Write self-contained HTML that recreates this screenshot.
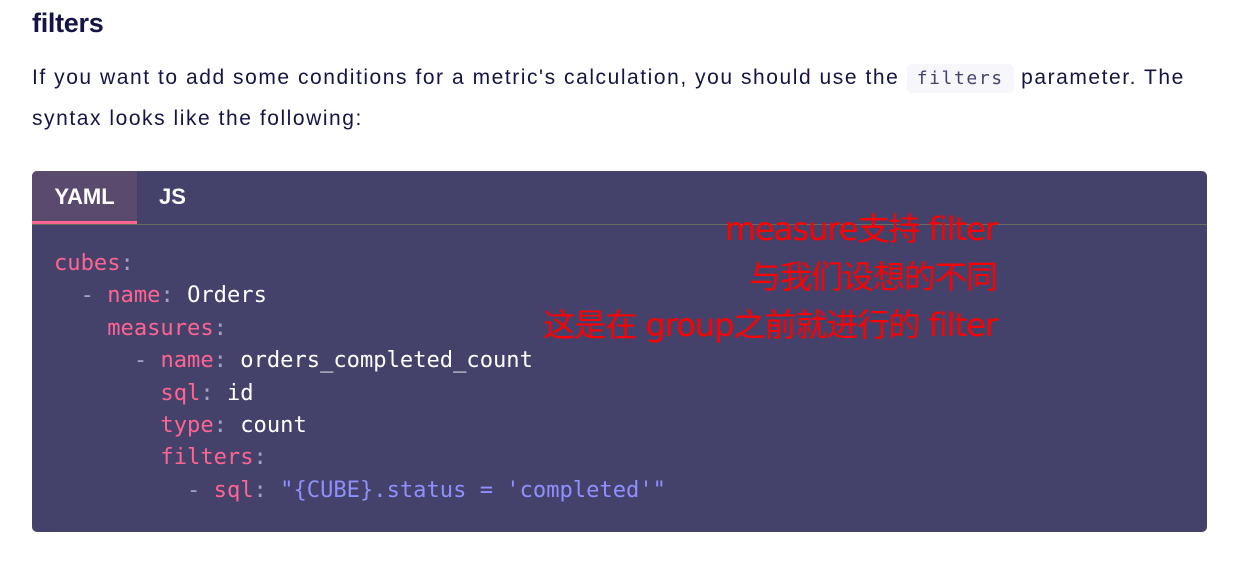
<!DOCTYPE html>
<html><head><meta charset="utf-8"><style>
body{margin:0;background:#fff;width:1255px;height:571px;overflow:hidden;position:relative;font-family:"Liberation Sans","Noto Sans CJK SC",sans-serif;}
h2{position:absolute;left:32px;top:8px;margin:0;font-size:27px;font-weight:bold;color:#141446;letter-spacing:-0.3px}
p{position:absolute;left:32px;top:58px;margin:0;width:1200px;font-size:21px;line-height:40px;color:#141446;letter-spacing:1.55px;white-space:nowrap}
code.i{font-family:"DejaVu Sans Mono",monospace;font-size:18px;background:#f6f6fb;color:#43436b;padding:4px 10px;border-radius:5px;letter-spacing:1.6px}
.blk{position:absolute;left:32px;top:171px;width:1175px;height:361px;background:#44426a;border-radius:5px;overflow:hidden}
.tabs{height:53px;border-bottom:1px solid #6b6a5e;position:relative}
.tab{position:absolute;top:0;height:50px;line-height:52px;color:#fff;font-weight:bold;font-size:22px}
.t1{left:0;width:105px;background:#5a4a6e;text-align:center;border-bottom:3px solid #ff6492}
.t2{left:127px}
pre{position:absolute;left:22px;top:76px;margin:0;font-family:"DejaVu Sans Mono",monospace;font-size:22.1px;line-height:32.4px;color:#fff}
.k{color:#ff6492}.d{color:#a3a1c8}.s{color:#8f8fff}
.r{position:absolute;right:258px;top:205px;text-align:right;color:#f00;font-size:32px;line-height:48px;font-family:"DejaVu Sans","Noto Sans CJK SC",sans-serif;letter-spacing:-1px}
</style></head><body>
<h2>filters</h2>
<p>If you want to add some conditions for a metric's calculation, you should use the <code class="i">filters</code> parameter. The<br>syntax looks like the following:</p>
<div class="blk">
<div class="tabs"><div class="tab t1">YAML</div><div class="tab t2">JS</div></div>
<pre><span class="k">cubes</span><span class="d">:</span>
  <span class="d">-</span> <span class="k">name</span><span class="d">:</span> Orders
    <span class="k">measures</span><span class="d">:</span>
      <span class="d">-</span> <span class="k">name</span><span class="d">:</span> orders_completed_count
        <span class="k">sql</span><span class="d">:</span> id
        <span class="k">type</span><span class="d">:</span> count
        <span class="k">filters</span><span class="d">:</span>
          <span class="d">-</span> <span class="k">sql</span><span class="d">:</span> <span class="s">"{CUBE}.status = 'completed'"</span></pre>
</div>
<div class="r">measure支持 filter<br>与我们设想的不同<br>这是在 group之前就进行的 filter</div>
</body></html>
